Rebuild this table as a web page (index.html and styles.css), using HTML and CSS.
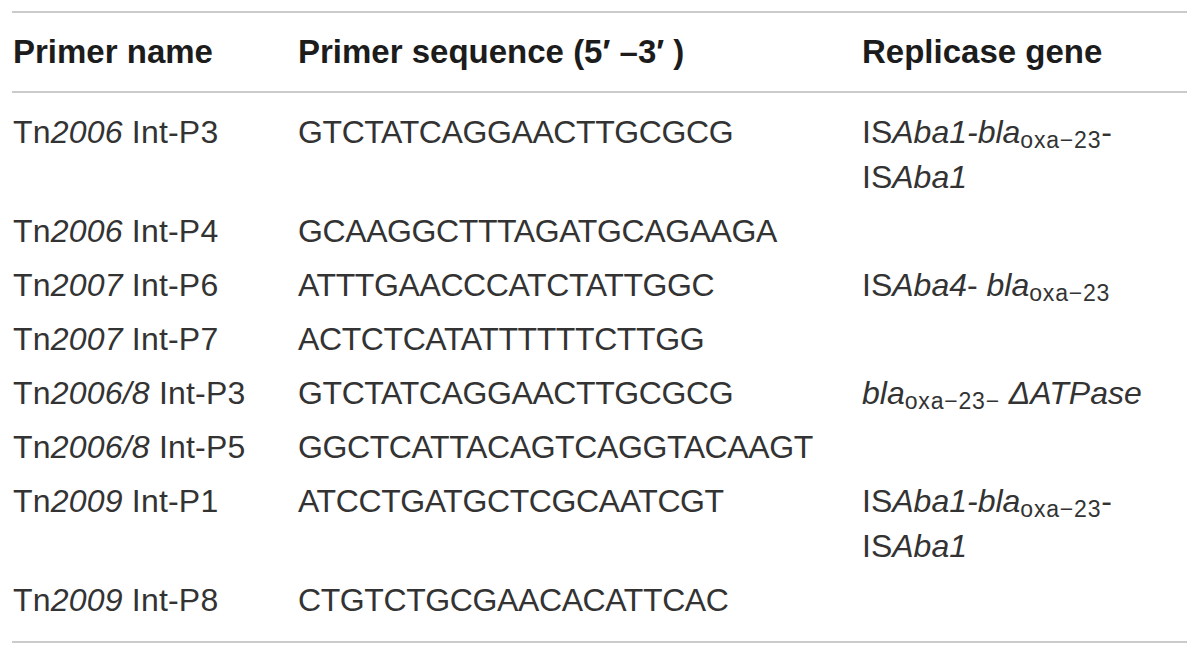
FILE: index.html
```html
<!DOCTYPE html>
<html lang="en">
<head>
<meta charset="utf-8">
<title>Primers</title>
<link rel="stylesheet" href="styles.css">
</head>
<body>
<div class="wrap">
<table class="primers">
  <colgroup>
    <col class="c1">
    <col class="c2">
    <col class="c3">
  </colgroup>
  <thead>
    <tr><th>Primer name</th><th>Primer sequence (5′ –3′ )</th><th>Replicase gene</th></tr>
  </thead>
  <tbody>
    <tr>
      <td class="name">Tn<i>2006</i> Int-P3</td>
      <td class="seq">GTCTATCAGGAACTTGCGCG</td>
      <td class="gene">IS<i>Aba1-bla</i><span class="sub">oxa−23</span>-<br>IS<i>Aba1</i></td>
    </tr>
    <tr>
      <td class="name">Tn<i>2006</i> Int-P4</td>
      <td class="seq">GCAAGGCTTTAGATGCAGAAGA</td>
      <td class="gene"></td>
    </tr>
    <tr>
      <td class="name">Tn<i>2007</i> Int-P6</td>
      <td class="seq">ATTTGAACCCATCTATTGGC</td>
      <td class="gene">IS<i>Aba4</i>- <i>bla</i><span class="sub">oxa−23</span></td>
    </tr>
    <tr>
      <td class="name">Tn<i>2007</i> Int-P7</td>
      <td class="seq">ACTCTCATATTTTTTCTTGG</td>
      <td class="gene"></td>
    </tr>
    <tr>
      <td class="name">Tn<i>2006/8</i> Int-P3</td>
      <td class="seq">GTCTATCAGGAACTTGCGCG</td>
      <td class="gene"><i>bla</i><span class="sub">oxa−23−</span> <i>ΔATPase</i></td>
    </tr>
    <tr>
      <td class="name">Tn<i>2006/8</i> Int-P5</td>
      <td class="seq">GGCTCATTACAGTCAGGTACAAGT</td>
      <td class="gene"></td>
    </tr>
    <tr>
      <td class="name">Tn<i>2009</i> Int-P1</td>
      <td class="seq">ATCCTGATGCTCGCAATCGT</td>
      <td class="gene">IS<i>Aba1-bla</i><span class="sub">oxa−23</span>-<br>IS<i>Aba1</i></td>
    </tr>
    <tr>
      <td class="name">Tn<i>2009</i> Int-P8</td>
      <td class="seq">CTGTCTGCGAACACATTCAC</td>
      <td class="gene"></td>
    </tr>
  </tbody>
</table>
</div>
</body>
</html>
```
FILE: styles.css
```css
html, body {
  margin: 0;
  background: #ffffff;
}

body {
  font-family: "Liberation Sans", Arial, Helvetica, sans-serif;
  color: #333333;
}

.wrap {
  padding: 11px 13px 0 12px;
}

.primers {
  width: 1175px;
  border-collapse: collapse;
  table-layout: fixed;
  font-size: 32px;
  line-height: 45px;
}

.c1 { width: 285px; }
.c2 { width: 564px; }
.c3 { width: auto; }

.primers thead tr {
  border-top: 2px solid #cbcbcb;
  border-bottom: 2px solid #cbcbcb;
}

.primers th {
  text-align: left;
  font-size: 33px;
  font-weight: 700;
  color: #1c1c1c;
  padding: 16px 0 17px 1px;
  vertical-align: top;
  white-space: nowrap;
}

.primers td {
  text-align: left;
  vertical-align: top;
  padding: 4.5px 0 4.5px 1px;
  white-space: nowrap;
}

.primers td.name {
  letter-spacing: 0.2px;
}

.primers td.seq {
  letter-spacing: -0.4px;
}

.primers tbody tr:first-child td {
  padding-top: 17px;
}

.primers tbody tr:last-child {
  border-bottom: 2px solid #cbcbcb;
}

.primers tbody tr:last-child td {
  padding-bottom: 17.5px;
}

.primers i {
  font-style: italic;
}

.sub {
  font-size: 0.72em;
  line-height: 0;
  vertical-align: -5px;
  letter-spacing: 0.8px;
}
```
